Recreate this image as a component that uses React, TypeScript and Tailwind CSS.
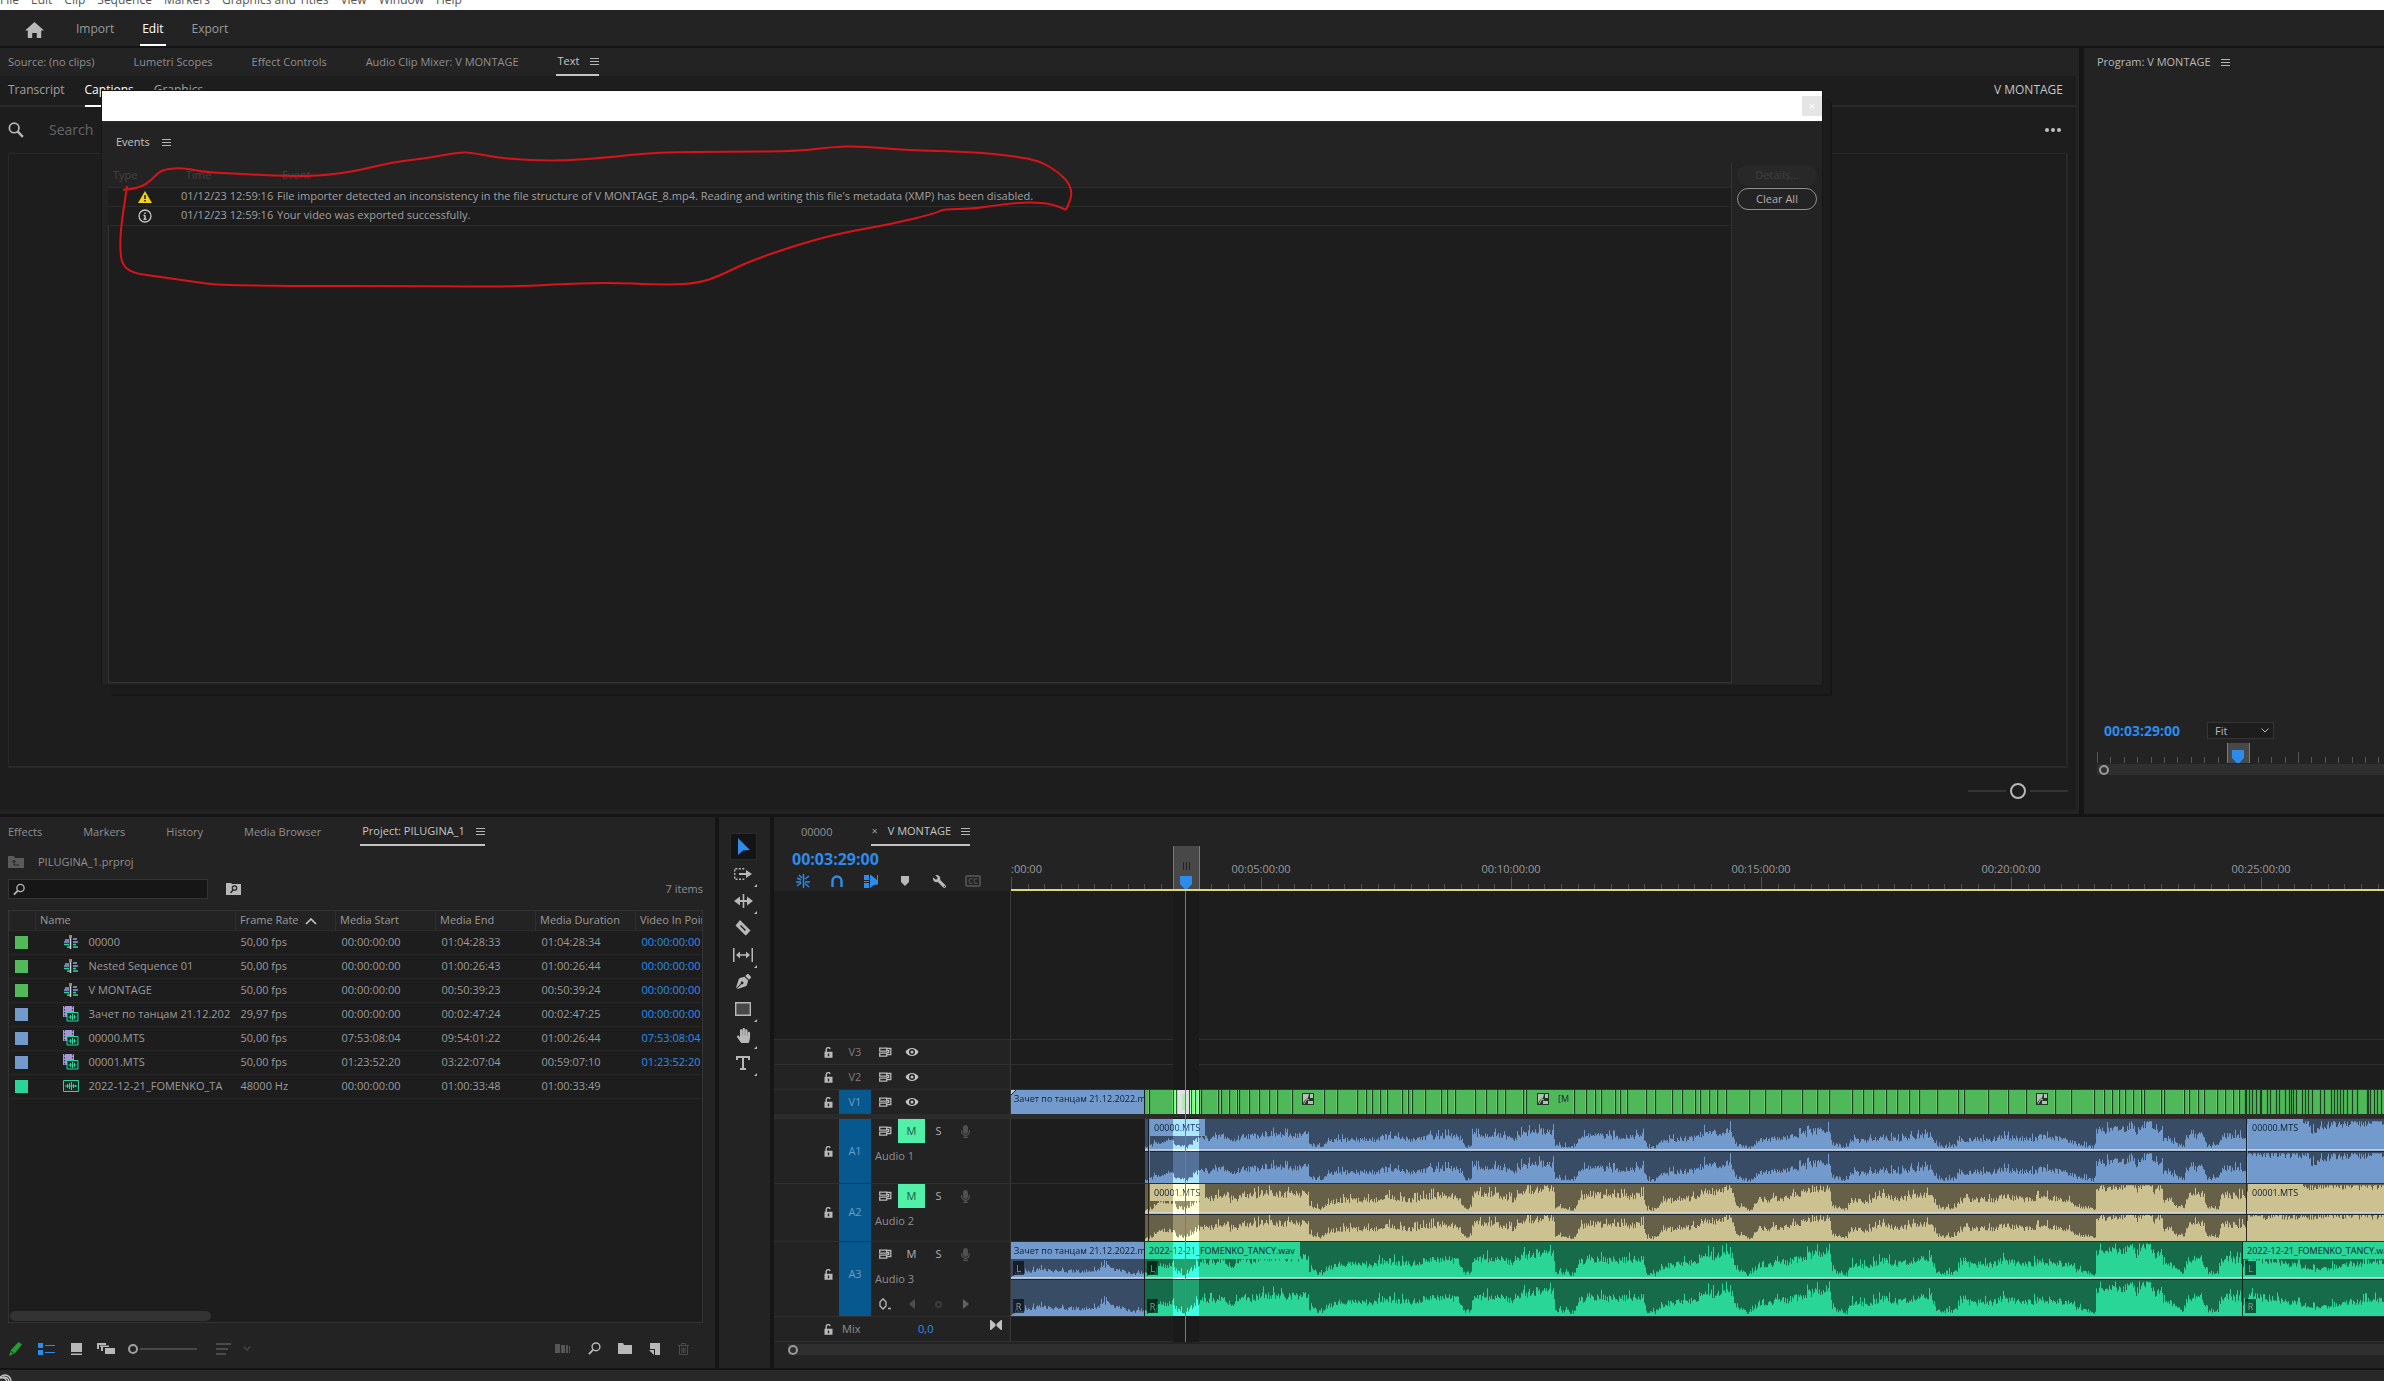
import React, { useState } from "react";
import clsx from "clsx";
import { FaHandPaper, FaMicrophone, FaPenNib, FaWrench } from "react-icons/fa";

type Point = [number, number];

interface MediaItem {
  name: string;
  kind: "sequence" | "video" | "audio";
  swatch: string;
  rate: string;
  start: string;
  end: string;
  duration: string;
  inPoint: string;
}

const MENU = ["File", "Edit", "Clip", "Sequence", "Markers", "Graphics and Titles", "View", "Window", "Help"];

const MEDIA: MediaItem[] = [
  { name: "00000", kind: "sequence", swatch: "bg-[#52b95a]", rate: "50,00 fps", start: "00:00:00:00", end: "01:04:28:33", duration: "01:04:28:34", inPoint: "00:00:00:00" },
  { name: "Nested Sequence 01", kind: "sequence", swatch: "bg-[#52b95a]", rate: "50,00 fps", start: "00:00:00:00", end: "01:00:26:43", duration: "01:00:26:44", inPoint: "00:00:00:00" },
  { name: "V MONTAGE", kind: "sequence", swatch: "bg-[#52b95a]", rate: "50,00 fps", start: "00:00:00:00", end: "00:50:39:23", duration: "00:50:39:24", inPoint: "00:00:00:00" },
  { name: "Зачет по танцам 21.12.202", kind: "video", swatch: "bg-[#729acc]", rate: "29,97 fps", start: "00:00:00:00", end: "00:02:47:24", duration: "00:02:47:25", inPoint: "00:00:00:00" },
  { name: "00000.MTS", kind: "video", swatch: "bg-[#729acc]", rate: "50,00 fps", start: "07:53:08:04", end: "09:54:01:22", duration: "01:00:26:44", inPoint: "07:53:08:04" },
  { name: "00001.MTS", kind: "video", swatch: "bg-[#729acc]", rate: "50,00 fps", start: "01:23:52:20", end: "03:22:07:04", duration: "00:59:07:10", inPoint: "01:23:52:20" },
  { name: "2022-12-21_FOMENKO_TA", kind: "audio", swatch: "bg-[#2ad59a]", rate: "48000 Hz", start: "00:00:00:00", end: "01:00:33:48", duration: "01:00:33:49", inPoint: "" },
];

// Lane drawings use timeline pixels; the lane itself starts at 1011.
const LANE_START = 1011;
const LANE_END = 2384;

const CUTS = [
  1149, 1173, 1176, 1189, 1191, 1195, 1199, 1201, 1218, 1221, 1229, 1237, 1239, 1249, 1259, 1269, 1277, 1292, 1324, 1337,
  1357, 1366, 1372, 1380, 1387, 1402, 1408, 1412, 1425, 1441, 1447, 1455, 1475, 1486, 1497, 1505, 1523, 1526, 1574,
  1586, 1595, 1601, 1615, 1620, 1627, 1646, 1655, 1672, 1682, 1695, 1700, 1709, 1717, 1726, 1749, 1765, 1781, 1802,
  1817, 1829, 1852, 1863, 1873, 1886, 1897, 1909, 1919, 1937, 1958, 1964, 1988, 2008, 2026, 2055, 2071, 2094, 2104,
  2112, 2119, 2125, 2133, 2141, 2144, 2161, 2164, 2184, 2189, 2198, 2204, 2217, 2225, 2233, 2239, 2245, 2246, 2249,
  2252, 2256, 2260, 2261, 2267, 2270, 2276, 2279, 2285, 2289, 2291, 2293, 2296, 2302, 2305, 2308, 2312, 2320, 2324,
  2331, 2334, 2337, 2340, 2343, 2347, 2352, 2357, 2367, 2368, 2370, 2374, 2377, 2381,
];

const ENVELOPE: Point[] = [
  [1145, 0.1], [1150, 0.12], [1160, 0.3], [1172, 0.32], [1177, 0.15], [1187, 0.1], [1194, 0.3], [1200, 0.4], [1215, 0.4],
  [1222, 0.5], [1232, 0.3], [1245, 0.5], [1250, 0.45], [1266, 0.55], [1282, 0.5], [1300, 0.5], [1308, 0.55], [1309, 0.22],
  [1321, 0.1], [1327, 0.25], [1339, 0.35], [1375, 0.35], [1384, 0.45], [1411, 0.35], [1429, 0.45], [1443, 0.48],
  [1457, 0.45], [1464, 0.15], [1471, 0.12], [1472, 0.5], [1496, 0.5], [1514, 0.35], [1521, 0.55], [1536, 0.62],
  [1553, 0.62], [1555, 0.15], [1575, 0.1], [1578, 0.4], [1589, 0.5], [1607, 0.45], [1629, 0.45], [1643, 0.5], [1647, 0.1],
  [1655, 0.1], [1661, 0.3], [1679, 0.38], [1693, 0.4], [1704, 0.6], [1718, 0.55], [1730, 0.7], [1736, 0.2], [1750, 0.08],
  [1759, 0.35], [1786, 0.4], [1810, 0.6], [1829, 0.68], [1832, 0.2], [1847, 0.1], [1851, 0.35], [1865, 0.3], [1870, 0.35],
  [1883, 0.45], [1898, 0.35], [1912, 0.45], [1931, 0.5], [1937, 0.12], [1956, 0.15], [1960, 0.35], [1993, 0.35],
  [2000, 0.45], [2030, 0.35], [2041, 0.45], [2052, 0.4], [2066, 0.35], [2077, 0.2], [2095, 0.1], [2096, 0.65],
  [2125, 0.72], [2132, 0.88], [2136, 0.62], [2147, 0.88], [2154, 0.6], [2162, 0.7], [2163, 0.35], [2169, 0.4],
  [2176, 0.2], [2184, 0.15], [2186, 0.45], [2202, 0.5], [2207, 0.15], [2218, 0.15], [2222, 0.5], [2242, 0.45], [2246, 0.3],
];

const BLUE_TAIL: Point[] = [[2246, 0.3], [2248, 0.93], [2308, 0.93], [2312, 0.62], [2318, 0.62], [2322, 0.82], [2340, 0.88], [2384, 0.95]];
const TAN_TAIL: Point[] = [[2246, 0.5], [2248, 0.92], [2384, 0.94]];
const GREEN_TAIL: Point[] = [[2243, 0.3], [2250, 0.55], [2262, 0.52], [2290, 0.4], [2315, 0.22], [2345, 0.38], [2384, 0.48]];
const INTRO: Point[] = [[1011, 0.1], [1016, 0.2], [1024, 0.3], [1040, 0.45], [1052, 0.35], [1080, 0.35], [1096, 0.4], [1104, 0.65], [1112, 0.5], [1124, 0.35], [1132, 0.2], [1144, 0.3]];

function levelAt(env: Point[], x: number) {
  for (let i = 1; i < env.length; i++) {
    if (x <= env[i][0]) {
      const [x0, y0] = env[i - 1];
      const [x1, y1] = env[i];
      return y0 + ((y1 - y0) * (x - x0)) / (x1 - x0);
    }
  }
  return env[env.length - 1][1];
}

function noise(x: number, seed: number) {
  const v = Math.sin(x * 12.9898 + seed * 78.233) * 43758.5453;
  return v - Math.floor(v);
}

function wavePath(env: Point[], from: number, to: number, base: number, height: number, gain: number, seed: number) {
  let d = `M${from - LANE_START} ${base}`;
  for (let x = from; x < to; x++) {
    const n = noise(x, seed);
    const level = levelAt(env, x) * gain;
    const jitter = (n - 0.5) * 0.28 + (n > 0.93 ? 0.12 : 0);
    const h = Math.max(0.04, Math.min(0.96, level + jitter * Math.min(1, 0.35 + level))) * height;
    d += `V${(base - h).toFixed(1)}H${x + 1 - LANE_START}`;
  }
  return `${d}V${base}Z`;
}

const SCRIBBLE: Point[] = [
  [123, 190], [134, 189], [147, 184], [155, 176], [162, 170], [176, 168], [190, 169], [204, 172], [240, 174], [286, 176], [316, 176], [352, 172],
  [393, 162], [429, 158], [459, 152], [474, 153], [505, 159], [556, 161], [602, 158], [658, 152], [730, 152], [800, 151],
  [831, 147], [861, 146], [902, 150], [973, 152], [1014, 156], [1040, 161], [1058, 172], [1069, 183], [1072, 194], [1069, 203], [1066, 210],
  [1064, 209], [1052, 204], [1030, 202], [1004, 204], [973, 209], [943, 209], [937, 213], [892, 224], [841, 233], [800, 244],
  [750, 261], [719, 276], [699, 283], [668, 285], [597, 282], [510, 287], [449, 286], [224, 286], [189, 281], [153, 276],
  [133, 273], [122, 265], [120, 248], [121, 227], [125, 200], [127, 186],
];

function smoothPath(points: Point[]) {
  let d = `M${points[0][0]} ${points[0][1]}`;
  for (let i = 1; i < points.length - 1; i++) {
    const [x, y] = points[i];
    const [nx, ny] = points[i + 1];
    d += `Q${x} ${y} ${(x + nx) / 2} ${(y + ny) / 2}`;
  }
  const last = points[points.length - 1];
  return `${d}L${last[0]} ${last[1]}`;
}

const Burger = () => (
  <svg width="9" height="9" viewBox="0 0 9 9" stroke="#b5b5b5" className="shrink-0">
    <path d="M0 1.5h9M0 4.5h9M0 7.5h9" />
  </svg>
);

const Lens = ({ className, size = 14 }: { className?: string; size?: number }) => (
  <svg width={size} height={size} viewBox="0 0 14 14" fill="none" stroke="currentColor" strokeWidth="1.5" className={className}>
    <circle cx="8.6" cy="5.2" r="4.2" />
    <path d="M5.6 8.2 1 13" strokeWidth="2" />
  </svg>
);

const LockIcon = () => (
  <svg width="9" height="11" viewBox="0 0 9 11" className="text-[#b9b9b9]">
    <path d="M2.2 5V2.6a2 2 0 0 1 3.9-.6" fill="none" stroke="currentColor" strokeWidth="1.4" />
    <path fillRule="evenodd" d="M.5 4.8h8v5.9h-8zM3.8 6.4v2.8h1.4V6.4z" fill="currentColor" />
  </svg>
);

const SyncIcon = () => (
  <svg width="13" height="11" viewBox="0 0 13 11" fill="none" stroke="#b9b9b9" strokeWidth="1.3">
    <path d="M.7 1.2h7v3h-7zM.7 6.2h7v3h-7z" />
    <path d="M7.7 1.5h4.1v6.2H7.7M7.7 3.7h2v2h-2" />
  </svg>
);

const EyeIcon = () => (
  <svg width="14" height="10" viewBox="0 0 14 10">
    <path d="M.5 5C3-.2 11-.2 13.5 5 11 10.2 3 10.2.5 5z" fill="#c4c4c4" />
    <circle cx="7" cy="5" r="3" fill="#232323" />
    <circle cx="7" cy="5" r="1.5" fill="#c4c4c4" />
  </svg>
);

const FxBadge = () => (
  <svg width="12" height="12" viewBox="0 0 12 12">
    <path d="M0 0h12v12H0z" fill="#1c3a1f" />
    <path d="M1 1h6l-1 4-2 1-3 4zM8 1h3v4H8zM6 8h5v3H6z" fill="#b8bdb8" />
    <path d="M2 11 5 6l2 1" stroke="#b8bdb8" fill="none" />
  </svg>
);

const MediaIcon = ({ kind }: { kind: MediaItem["kind"] }) => {
  if (kind === "sequence") {
    return (
      <svg width="16" height="14" viewBox="0 0 16 14">
        <path d="M2 5h4M1 7h5M10 4h4M10 7h5" stroke="#8fa3e0" strokeWidth="1.5" />
        <path d="M1 9.5h5M10 9.5h3M4 12h3M10 12h5" stroke="#2fd39b" strokeWidth="1.5" />
        <path d="M7.5 1v13" stroke="#d0d0d0" strokeWidth="1.5" />
        <path d="M6 0h3v3H6z" fill="#8b8b8b" />
      </svg>
    );
  }
  return (
    <svg width="16" height="16" viewBox="0 0 16 16">
      {kind === "video" && (
        <>
          <path d="M0 0h11v11H0z" fill="#a596d8" />
          <path d="M1.5 0v11M9.5 0v11" stroke="#352f4c" strokeDasharray="1.5 1.5" />
          <path d="M4 6.5h11v8.5H4z" fill="#1d2a26" stroke="#2fd39b" />
          <path d="M5.5 11h8M7.5 9v4M9.5 8v6M11.5 9v4" stroke="#2fd39b" />
        </>
      )}
      {kind === "audio" && (
        <>
          <path d="M.5 2.5h15v11H.5z" fill="#1d2a26" stroke="#2fd39b" />
          <path d="M2 8h12M4.5 6v4M6.5 5v6M8.5 4v8M10.5 6v4M12.5 7v2" stroke="#2fd39b" />
        </>
      )}
    </svg>
  );
};

const PlayheadMarker = () => (
  <svg width="12" height="13" viewBox="0 0 12 13" className="mr-px shrink-0">
    <path d="M0 0h12v8l-4.5 5h-3L0 8z" fill="#2d8ceb" />
  </svg>
);

const TopBar = () => {
  const [active, setActive] = useState("Edit");
  return (
    <>
      <nav className="flex h-[10px] shrink-0 items-end gap-3 overflow-hidden bg-white pb-[2px] text-[12px] leading-4 text-[#555]">
        {MENU.map((m) => (
          <a key={m} href="#" className="shrink-0 whitespace-nowrap">{m}</a>
        ))}
      </nav>
      <header className="flex h-[38px] shrink-0 items-stretch border-b-2 border-[#141414] bg-[#232323] pl-[25px]">
        <button aria-label="Home" className="mr-[30px] flex items-center pt-1">
          <svg width="19" height="16" viewBox="0 0 19 16" fill="#b8b8b8">
            <path d="M9.5 0 19 8.5h-2.8V16h-4.4v-5H7.2v5H2.8V8.500H0z" />
          </svg>
        </button>
        <div className="flex gap-6">
          {["Import", "Edit", "Export"].map((t) => (
            <button
              key={t}
              onClick={() => setActive(t)}
              className={clsx("border-b-2 px-[2px] pt-1 text-[12px]", active === t ? "border-white text-white" : "border-transparent text-[#9a9a9a]")}
            >
              {t}
            </button>
          ))}
        </div>
      </header>
    </>
  );
};

const PanelTabs = ({ tabs, active, className }: { tabs: string[]; active: string; className: string }) => (
  <div className={clsx("flex h-7 shrink-0 items-center pl-2 text-[11px] text-[#8f8f8f]", className)}>
    {tabs.map((t) =>
      t === active ? (
        <button key={t} className="-mx-[2px] flex h-full items-center gap-[11px] border-b-2 border-[#c4c4c4] pl-[2px] text-[#c4c4c4]">
          {t}
          <Burger />
        </button>
      ) : (
        <button key={t} className="shrink-0 whitespace-nowrap">{t}</button>
      )
    )}
  </div>
);

const EventsWindow = () => (
  <section className="absolute top-[43px] right-[257px] left-[102px] flex h-[594px] flex-col bg-[#232323] shadow-[8px_9px_0_0_#1b1b1b,10px_11px_0_0_#151515] outline outline-[#161616]">
    <div className="flex h-[30px] shrink-0 items-center justify-end bg-white">
      <button aria-label="Close" className="flex h-5 w-5 items-center justify-center bg-[#e5e5e5] text-[11px] text-white">×</button>
    </div>
    <div className="flex h-[42px] shrink-0 items-center gap-3 border-t border-[#2d2d2d] pl-[14px] text-[11px] text-[#c4c4c4]">
      Events
      <Burger />
    </div>
    <div className="flex min-h-0 flex-1 pb-[2px] pl-[6px]">
      <div className="flex flex-1 flex-col">
        <table className="w-full table-fixed text-left text-[11px] text-[#a0a0a0]">
          <colgroup>
            <col className="w-[73px]" />
            <col className="w-[96px]" />
            <col />
          </colgroup>
          <thead>
            <tr className="h-6 text-[#444]">
              <th className="pl-[5px] font-normal">Type</th>
              <th className="pl-[5px] font-normal">Time</th>
              <th className="pl-[5px] font-normal">Event</th>
            </tr>
          </thead>
          <tbody className="bg-[#1d1d1d]">
            <tr className="h-[19px] border-y border-[#2c2c2c]">
              <td>
                <svg width="14" height="12" viewBox="0 0 14 12" className="ml-[30px]">
                  <path d="M7 0l7 12H0z" fill="#f0d21c" />
                  <path d="M7 4v4M7 9v1.5" stroke="#222" strokeWidth="1.5" />
                </svg>
              </td>
              <td className="whitespace-nowrap">01/12/23 12:59:16</td>
              <td className="whitespace-nowrap">File importer detected an inconsistency in the file structure of V MONTAGE_8.mp4. Reading and writing this file's metadata (XMP) has been disabled.</td>
            </tr>
            <tr className="h-[19px] border-y border-[#2c2c2c]">
              <td>
                <svg width="14" height="14" viewBox="0 0 14 14" className="ml-[30px]" fill="none" stroke="#c4c4c4">
                  <circle cx="7" cy="7" r="6" strokeWidth="1.3" />
                  <path d="M7 6.3v4M7 3.5v1.5M5.5 6.5H7M5.5 10.3h3" strokeWidth="1.5" />
                </svg>
              </td>
              <td className="whitespace-nowrap">01/12/23 12:59:16</td>
              <td className="whitespace-nowrap">Your video was exported successfully.</td>
            </tr>
          </tbody>
        </table>
        <div className="flex-1 border-b border-l border-[#333] bg-[#1d1d1d]" />
      </div>
      <div className="flex w-[91px] flex-col gap-[2px] border-l border-[#333] px-[5px] pt-[2px] text-[11px]">
        <button disabled className="h-[21px] rounded-full bg-[#282828] text-[#404040]">Details...</button>
        <button className="h-[22px] rounded-full border border-[#8f8f8f] text-[#b0b0b0]">Clear All</button>
      </div>
    </div>
    <svg className="pointer-events-none absolute top-0 left-0" width="1000" height="210" viewBox="102 91 1000 210">
      <path d={smoothPath(SCRIBBLE)} fill="none" stroke="#d8131a" strokeWidth="2" strokeLinejoin="round" />
    </svg>
  </section>
);

const TextPanel = () => (
  <section className="relative flex flex-1 flex-col bg-[#232323] pr-[3px] pb-1">
    <PanelTabs className="gap-[39px]" tabs={["Source: (no clips)", "Lumetri Scopes", "Effect Controls", "Audio Clip Mixer: V MONTAGE", "Text"]} active="Text" />
    <div className="flex flex-1 flex-col bg-[#1d1d1d]">
      <div className="flex h-[31px] shrink-0 items-stretch gap-5 border-b-2 border-[#2a2a2a] pr-[13px] pl-2 text-[12px] text-[#a0a0a0]">
        <button className="pb-[2px]">Transcript</button>
        <button className="-mb-[2px] border-b-2 border-white pb-[2px] text-white">Captions</button>
        <button className="pb-[2px]">Graphics</button>
        <span className="ml-auto self-center pb-[2px] text-[#c4c4c4]">V MONTAGE</span>
      </div>
      <div className="flex h-[46px] shrink-0 items-center pr-[15px] pl-2">
        <Lens size={16} className="-scale-x-100 text-[#b8b8b8]" />
        <input aria-label="Search captions" placeholder="Search" className="ml-[25px] w-60 bg-transparent pb-[2px] text-[14px] placeholder-[#666] outline-none" />
        <button aria-label="More" className="ml-auto flex gap-[2px]">
          <i className="h-1 w-1 rounded-full bg-[#c0c0c0]" />
          <i className="h-1 w-1 rounded-full bg-[#c0c0c0]" />
          <i className="h-1 w-1 rounded-full bg-[#c0c0c0]" />
        </button>
      </div>
      <div className="mr-2 ml-2 flex-1 border-2 border-t border-l border-[#282828]" />
      <div className="flex h-[42px] shrink-0 items-center justify-end pt-1 pr-2">
        <input
          type="range"
          aria-label="Zoom captions"
          className="h-4 w-[100px] appearance-none bg-transparent [&::-webkit-slider-runnable-track]:h-[2px] [&::-webkit-slider-runnable-track]:bg-[#333] [&::-webkit-slider-thumb]:-mt-[7px] [&::-webkit-slider-thumb]:h-4 [&::-webkit-slider-thumb]:w-4 [&::-webkit-slider-thumb]:appearance-none [&::-webkit-slider-thumb]:rounded-full [&::-webkit-slider-thumb]:border-2 [&::-webkit-slider-thumb]:border-[#b8b8b8] [&::-webkit-slider-thumb]:bg-[#1d1d1d] [&::-webkit-slider-thumb]:shadow-[0_0_0_4px_#1d1d1d]"
        />
      </div>
    </div>
    <EventsWindow />
  </section>
);

const ProgramPanel = () => (
  <section className="flex w-[300px] shrink-0 flex-col bg-[#232323] pl-[13px]">
    <div className="flex h-7 items-center gap-[10px] text-[11px] text-[#b8b8b8]">
      Program: V MONTAGE
      <Burger />
    </div>
    <div className="flex-1" />
    <div className="flex h-5 items-center gap-[27px] pl-[7px]">
      <span className="text-[14px] font-bold text-[#2d8ceb]">00:03:29:00</span>
      <div className="relative">
        <select aria-label="Zoom level" className="block h-[17px] w-[67px] appearance-none border border-[#353535] bg-[#1d1d1d] pl-[7px] text-[11px] leading-none text-[#b8b8b8]">
          <option>Fit</option>
        </select>
        <svg width="8" height="5" viewBox="0 0 8 5" fill="none" stroke="#b8b8b8" className="pointer-events-none absolute top-[6px] right-[5px]">
          <path d="M.5.5 4 4 7.5.5" />
        </svg>
      </div>
    </div>
    <div className="relative mt-[2px] h-[22px] overflow-hidden">
      <svg width="287" height="22" stroke="#555">
        {Array.from({ length: 22 }, (_, i) => {
          const x = Math.round(i * 13.4) + 0.5;
          return <path key={i} d={`M${x} ${i % 15 === 0 ? 10 : 15}V21`} />;
        })}
      </svg>
      <div className="absolute top-[1px] left-[130px] flex h-[20px] w-[23px] items-end justify-center border-x border-[#2d8ceb] bg-[#484848]">
        <PlayheadMarker />
      </div>
    </div>
    <div className="mb-[39px] flex h-[11px] items-center bg-[#2f2f2f] pl-[2px]">
      <i className="h-[10px] w-[10px] rounded-full border-2 border-[#9a9a9a]" />
    </div>
  </section>
);

const ProjectPanel = () => (
  <section className="flex w-[715px] shrink-0 flex-col bg-[#232323] pt-px pr-3">
    <PanelTabs className="gap-[41px]" tabs={["Effects", "Markers", "History", "Media Browser", "Project: PILUGINA_1"]} active="Project: PILUGINA_1" />
    <div className="mt-[5px] flex h-[22px] items-center gap-[14px] pl-2 text-[11px] text-[#8f8f8f]">
      <svg width="16" height="12" viewBox="0 0 16 12">
        <path d="M0 0h6l1 2h9v10H0z" fill="#5a5a5a" />
        <path d="M6 5v4h5M4 6.5 6 4l2 2.5" fill="none" stroke="#222" />
      </svg>
      PILUGINA_1.prproj
    </div>
    <div className="mt-[6px] flex h-5 items-center pl-2">
      <label className="flex h-5 w-[200px] items-center border border-[#333] bg-[#161616] pl-1">
        <Lens size={13} className="text-[#b8b8b8]" />
        <input aria-label="Filter bin content" className="w-full bg-transparent pl-1 text-[11px] text-[#b8b8b8] outline-none" />
      </label>
      <button aria-label="Create search bin" className="ml-[18px]">
        <svg width="15" height="12" viewBox="0 0 15 12">
          <path d="M0 0h5l1 1h9v11H0z" fill="#b8b8b8" />
          <circle cx="8.5" cy="5" r="2.2" fill="none" stroke="#222" strokeWidth="1.3" />
          <path d="M7 7 4.5 10" stroke="#222" strokeWidth="1.3" />
        </svg>
      </button>
      <span className="ml-auto text-[11px] text-[#8f8f8f]">7 items</span>
    </div>
    <div className="mt-[11px] ml-2 flex flex-1 flex-col overflow-hidden border border-[#333] bg-[#1d1d1d]">
      <table className="w-full table-fixed text-left text-[11px] text-[#9a9a9a]">
        <colgroup>
          <col className="w-[26px]" />
          <col className="w-[200px]" />
          <col className="w-[100px]" />
          <col className="w-[100px]" />
          <col className="w-[100px]" />
          <col className="w-[100px]" />
          <col />
        </colgroup>
        <thead>
          <tr className="h-[19px] border-b border-[#2a2a2a] bg-[#232323] whitespace-nowrap [&>th]:border-l [&>th]:border-[#2e2e2e] [&>th]:pl-1 [&>th]:font-normal">
            <th aria-label="Label" />
            <th>Name</th>
            <th>
              Frame Rate
              <svg width="12" height="7" viewBox="0 0 12 7" fill="none" stroke="#c4c4c4" strokeWidth="1.6" className="ml-[6px] inline">
                <path d="M1 6 6 1l5 5" />
              </svg>
            </th>
            <th>Media Start</th>
            <th>Media End</th>
            <th>Media Duration</th>
            <th className="overflow-hidden">Video In Poin</th>
          </tr>
        </thead>
        <tbody>
          {MEDIA.map((m) => (
            <tr key={m.name} className="h-6 border-b border-[#282828] whitespace-nowrap">
              <td>
                <div className={clsx("ml-[5px] h-[13px] w-[13px]", m.swatch)} />
              </td>
              <td className="overflow-hidden pl-[27px]">
                <div className="flex items-center gap-[10px]">
                  <span className="w-4 shrink-0"><MediaIcon kind={m.kind} /></span>
                  {m.name}
                </div>
              </td>
              <td className="pl-[5px]">{m.rate}</td>
              <td className="pl-[6px]">{m.start}</td>
              <td className="pl-[6px]">{m.end}</td>
              <td className="pl-[6px]">{m.duration}</td>
              <td className="pl-[6px] text-[#2d8ceb]">{m.inPoint}</td>
            </tr>
          ))}
        </tbody>
      </table>
      <div className="mt-auto mb-px ml-px h-[10px] w-[201px] rounded-full bg-[#333]" />
    </div>
    <div className="flex h-[45px] shrink-0 items-center pt-[6px] pl-2 text-[#b8b8b8]">
      <button aria-label="Project writable">
        <svg width="15" height="14" viewBox="0 0 15 14">
          <path d="M10.5 0 14 2.5 7 11 1 14 3 8z" fill="#1fa031" />
          <path d="M3 9.5 5.5 11" stroke="#232323" />
        </svg>
      </button>
      <button aria-label="List view" className="ml-[15px]">
        <svg width="17" height="12" viewBox="0 0 17 12" fill="#2d8ceb">
          <path d="M0 0h5v5H0zM0 7h5v5H0zM7 2h10v1H7zM7 9h10v1H7z" />
        </svg>
      </button>
      <button aria-label="Icon view" className="ml-4">
        <svg width="11" height="12" viewBox="0 0 11 12" fill="currentColor">
          <path d="M0 0h11v9H0zM0 10.5h11V12H0z" />
        </svg>
      </button>
      <button aria-label="Freeform view" className="ml-[15px]">
        <svg width="18" height="11" viewBox="0 0 18 11">
          <path d="M0 0h9v2H2v4H0zM3 2.5h9v1.500H6v4H4V4H3zM8 5h10v6H8z" fill="currentColor" />
        </svg>
      </button>
      <input
        type="range"
        aria-label="Thumbnail size"
        defaultValue={0}
        className="ml-[13px] h-[10px] w-[69px] appearance-none bg-transparent [&::-webkit-slider-runnable-track]:h-[2px] [&::-webkit-slider-runnable-track]:bg-[#484848] [&::-webkit-slider-thumb]:-mt-1 [&::-webkit-slider-thumb]:h-[10px] [&::-webkit-slider-thumb]:w-[10px] [&::-webkit-slider-thumb]:appearance-none [&::-webkit-slider-thumb]:rounded-full [&::-webkit-slider-thumb]:border-2 [&::-webkit-slider-thumb]:border-[#a0a0a0] [&::-webkit-slider-thumb]:bg-[#232323] [&::-webkit-slider-thumb]:shadow-[0_0_0_2px_#232323]"
      />
      <button aria-label="Sort icons" className="ml-[19px] flex items-center gap-3">
        <svg width="15" height="12" viewBox="0 0 15 12" stroke="#5a5a5a" strokeWidth="1.5">
          <path d="M0 1h15M0 6h12M0 11h10" />
        </svg>
        <svg width="8" height="5" viewBox="0 0 8 5" fill="none" stroke="#444" strokeWidth="1.5">
          <path d="M.5.5 4 4 7.5.5" />
        </svg>
      </button>
      <div className="ml-auto flex items-center gap-[17px] pr-[14px]">
        <button aria-label="Automate to sequence" disabled>
          <svg width="16" height="9" viewBox="0 0 16 9" fill="#555"><path d="M0 0h5v9H0zM6 1h4v8H6zM11 1h2v8h-2zM14 2h1v7h-1z" /></svg>
        </button>
        <button aria-label="Find"><Lens size={13} /></button>
        <button aria-label="New bin">
          <svg width="14" height="11" viewBox="0 0 14 11" fill="currentColor"><path d="M0 0h5l1 2h8v9H0z" /></svg>
        </button>
        <button aria-label="New item">
          <svg width="12" height="12" viewBox="0 0 12 12" fill="currentColor"><path d="M1 0h10v12H6V6H1zM0 7l5 5V7z" /></svg>
        </button>
        <button aria-label="Clear" disabled>
          <svg width="11" height="12" viewBox="0 0 11 12" fill="none" stroke="#4a4a4a"><path d="M0 2.5h11M3.5 2V.5h4V2M1.5 3v8.5h8V3M4 4.5v5.5M5.5 4.5v5.5M7 4.5v5.5" /></svg>
        </button>
      </div>
    </div>
  </section>
);

const TOOLS: { label: string; more?: boolean; icon: React.ReactNode }[] = [
  { label: "Selection", icon: <svg width="13" height="17" viewBox="0 0 13 17"><path d="M1 0v17l5-4.500 7-.5z" fill="#2d8ceb" /></svg> },
  {
    label: "Track Select Forward",
    more: true,
    icon: (
      <svg width="18" height="12" viewBox="0 0 18 12">
        <path d="M10.3.7H.7v10.600h9.600" stroke="#b8b8b8" strokeWidth="1.4" strokeDasharray="2 1.5" fill="none" />
        <path d="M5 5h7V2l6 4-6 4V7H5z" fill="#b8b8b8" />
      </svg>
    ),
  },
  { label: "Ripple Edit", more: true, icon: <svg width="19" height="14" viewBox="0 0 19 14" fill="#b8b8b8"><path d="M8.700 0h1.600v14H8.700zM0 7l6-4.500V6h7V2.500L19 7l-6 4.500V8H6v3.500z" /></svg> },
  {
    label: "Razor",
    icon: (
      <svg width="16" height="16" viewBox="0 0 16 16">
        <path d="M5 0 15.5 10.5 11 15.5 9.5 14.5.5 5.5z" fill="#b8b8b8" />
        <path d="m5.5 5.5 5 5" stroke="#232323" strokeWidth="1.5" />
      </svg>
    ),
  },
  { label: "Slip", more: true, icon: <svg width="20" height="14" viewBox="0 0 20 14" fill="#b8b8b8"><path d="M0 0h1.500v14H0zM18.500 0H20v14h-1.500zM3 7l4-3.500v2.800h6V3.500L17 7l-4 3.500V7.700H7v2.800z" /></svg> },
  { label: "Pen", icon: <FaPenNib size={15} color="#b8b8b8" /> },
  { label: "Rectangle", more: true, icon: <svg width="16" height="14" viewBox="0 0 16 14"><path d="M.7.7h14.600v12.600H.7z" fill="#484848" stroke="#b8b8b8" strokeWidth="1.4" /></svg> },
  { label: "Hand", more: true, icon: <FaHandPaper size={15} color="#b8b8b8" /> },
  { label: "Type", more: true, icon: <svg width="14" height="14" viewBox="0 0 14 14" fill="none" stroke="#b8b8b8" strokeWidth="2"><path d="M1 4V1h12v3M7 1v12M4 13h6" /></svg> },
];

const ToolsPanel = () => (
  <section className="flex w-[51px] shrink-0 flex-col items-center bg-[#232323] pt-4 pr-[3px]">
    {TOOLS.map((t, i) => (
      <button
        key={t.label}
        aria-label={t.label}
        className={clsx("relative flex h-[27px] w-[27px] items-center justify-center", i === 0 && "border border-[#2a2a2a] bg-[#141414]")}
      >
        {t.icon}
        {t.more && <span className="absolute right-0 bottom-0 border-b-[3px] border-l-[3px] border-b-[#b8b8b8] border-l-transparent" />}
      </button>
    ))}
  </section>
);

const Wave = ({ from, to, fill, back, edge, upper, lower }: { from: number; to: number; fill: string; back: string; edge: number; upper: string; lower: string }) => (
  <>
    <rect x={from - LANE_START} y="0" width={to - from} height="100" fill={back} />
    <path d={upper} fill={fill} />
    <path d={lower} fill={fill} />
    <path d={`M${from - LANE_START} ${edge}H${to - LANE_START}`} stroke="#d3dbe3" strokeWidth="1.5" />
    <path d={`M${from - LANE_START} ${edge + 1.5}H${to - LANE_START}`} stroke="#20262e" strokeWidth="1.2" />
  </>
);

const Glow = () => <div className="absolute top-0 left-[162px] h-full w-[26px] bg-[#555] mix-blend-color-dodge" />;

const ChannelTag = ({ className, children }: { className: string; children: React.ReactNode }) => (
  <span className={clsx("absolute flex h-[14px] w-[11px] items-center justify-center bg-black/60 text-[#8a9a95]", className)}>{children}</span>
);

interface TrackProps {
  name: string;
  height: string;
  targeted?: boolean;
  audio?: string;
  muted?: boolean;
  keyframes?: boolean;
  children?: React.ReactNode;
}

const Track = ({ name, height, targeted, audio, muted, keyframes, children }: TrackProps) => (
  <div className={clsx("flex border-t border-[#303030]", height)}>
    <div className="flex w-[237px] shrink-0 border-r border-[#3a3a3a] bg-[#232323] pl-[50px]">
      <button aria-label={`Lock ${name}`} className={clsx("flex w-[15px] items-center", keyframes && "pb-[10px]")}>
        <LockIcon />
      </button>
      <button className={clsx("w-8 text-[11px]", targeted ? "bg-[#06588f] text-[#6f9dbd]" : "text-[#7d7d7d]", keyframes && "pb-[10px]")}>{name}</button>
      <div className="flex flex-1 flex-col pl-1 text-[11px] text-[#8f8f8f]">
        <div className="flex h-6 items-center">
          <button aria-label={`Sync lock ${name}`} className="ml-1 w-[19px]"><SyncIcon /></button>
          {audio ? (
            <>
              <button className={clsx("h-6 w-[27px]", muted ? "bg-[#50f0a8] text-[#1c5a3e]" : "text-[#b0b0b0]")}>M</button>
              <button className="w-[27px] text-[#b0b0b0]">S</button>
              <button aria-label={`Voice-over ${name}`} className="flex w-[27px] justify-center"><FaMicrophone size={13} color="#505050" /></button>
            </>
          ) : (
            <button aria-label={`Toggle output ${name}`} className="flex w-[27px] justify-center"><EyeIcon /></button>
          )}
        </div>
        {audio && <span className="mt-[5px] h-[23px]">{audio}</span>}
        {keyframes && (
          <div className="flex h-5 items-center">
            <button aria-label="Show keyframes" className="ml-1 w-[19px]">
              <svg width="13" height="12" viewBox="0 0 13 12" fill="none" stroke="#b8b8b8" strokeWidth="1.3">
                <path d="M4 .8 7 4v4l-3 3-3-3V4zM9 10.5h3" />
              </svg>
            </button>
            <button aria-label="Previous keyframe" className="flex w-[27px] justify-center"><svg width="6" height="10" fill="#505050"><path d="M6 0v10L0 5z" /></svg></button>
            <button aria-label="Add keyframe" className="flex w-[27px] justify-center"><i className="h-[7px] w-[7px] rounded-full border-2 border-[#3c3c3c]" /></button>
            <button aria-label="Next keyframe" className="flex w-[27px] justify-center"><svg width="6" height="10" fill="#606060"><path d="M0 0v10l6-5z" /></svg></button>
          </div>
        )}
      </div>
    </div>
    <div className="relative isolate z-10 flex-1 overflow-hidden text-[9px] leading-[17px] text-[#10202f]">{children}</div>
  </div>
);

const TimelineRuler = () => (
  <div className="relative flex-1 overflow-hidden text-[11px] leading-4 text-[#9a9a9a]">
    <span className="absolute top-11 left-0">:00:00</span>
    {["00:05:00:00", "00:10:00:00", "00:15:00:00", "00:20:00:00", "00:25:00:00"].map((t, i) => (
      <span key={t} className="absolute top-11 -translate-x-1/2" style={{ left: 250 * (i + 1) }}>{t}</span>
    ))}
    <svg className="absolute bottom-[2px] left-0" width="1400" height="12" stroke="#505050">
      {Array.from({ length: 84 }, (_, i) => {
        const x = Math.round((i * 250) / 15) + 0.5;
        return <path key={i} d={`M${x} ${i % 15 === 0 ? 0 : 7}V12`} />;
      })}
    </svg>
    <div className="absolute bottom-0 h-[2px] w-full bg-[#dcd873]" />
    <div className="absolute bottom-[2px] left-[162px] flex h-[43px] w-[27px] flex-col items-center justify-end gap-[6px] border-x border-[#2d8ceb] bg-[#484848]">
      <svg width="7" height="8" stroke="#222"><path d="M.5 0v8M3.5 0v8M6.5 0v8" /></svg>
      <PlayheadMarker />
    </div>
  </div>
);

const Timeline = () => (
  <section className="relative flex min-w-0 flex-1 flex-col bg-[#232323]">
    <div className="flex h-[74px] shrink-0">
      <div className="w-[237px] shrink-0 pt-px">
        <div className="flex h-7 items-stretch pl-[27px] text-[11px] text-[#8f8f8f]">
          <button>00000</button>
          <button className="ml-[39px] flex items-center gap-[10px] border-b-2 border-[#c4c4c4] text-[#c4c4c4]">
            <span className="text-[#9a9a9a]">×</span>
            V MONTAGE
            <Burger />
          </button>
        </div>
        <div className="mt-[3px] h-5 pl-[18px] text-[16px] leading-5 font-bold text-[#2d8ceb]">00:03:29:00</div>
        <div className="mt-1 flex items-center pl-3 [&>button]:flex [&>button]:h-4 [&>button]:w-[34px] [&>button]:items-center [&>button]:justify-center">
          <button aria-label="Insert as nests">
            <svg width="14" height="14" viewBox="0 0 14 14" stroke="#2d8ceb" strokeWidth="1.5">
              <path d="M7.5 0v14M1 4l4 2M0 8h5M1 12l4-3M9 5l4-3M9 8h5M9 9.5l4 3.5M3 1l3 3" />
            </svg>
          </button>
          <button aria-label="Snap">
            <svg width="12" height="12" viewBox="0 0 12 12" fill="none" stroke="#2d8ceb" strokeWidth="2.5"><path d="M1.5 12V6a4.5 4.5 0 0 1 9 0v6" /></svg>
          </button>
          <button aria-label="Linked selection">
            <svg width="15" height="13" viewBox="0 0 15 13" fill="#2d8ceb"><path d="M0 0h5v5H0zM6 0h1l6 5V0h1v9.500l-4 .5L6 13zM0 6h5v1H0zM0 8h5v5H0z" /></svg>
          </button>
          <button aria-label="Add marker">
            <svg width="8" height="10" viewBox="0 0 8 10" fill="#b8b8b8"><path d="M0 0h8v6L4 10 0 6z" /></svg>
          </button>
          <button aria-label="Timeline settings"><FaWrench size={13} color="#b8b8b8" className="-scale-x-100" /></button>
          <button aria-label="Captions">
            <span className="rounded-[2px] border-2 border-[#4c4c4c] px-px text-[8px] leading-[8px] font-bold text-[#4c4c4c]">CC</span>
          </button>
        </div>
      </div>
      <TimelineRuler />
    </div>

    <div className="relative bg-[#1d1d1d]">
      <div className="absolute top-0 left-[399px] h-full w-[26px] bg-[#1a1a1a]" />
      <div className="flex h-[148px]">
        <div className="w-[237px] border-r border-[#3a3a3a]" />
      </div>
      <Track name="V3" height="h-[25px]" />
      <Track name="V2" height="h-[25px]" />
      <Track name="V1" height="h-[25px]" targeted>
        <svg className="absolute top-0 left-0" width="1373" height="24">
          <rect width="133" height="24" fill="#729acc" />
          <path d="M0 0h5L0 5z" fill="#c9cfd6" />
          <path d="M5 0 0 5" stroke="#1d1d1d" />
          <rect x="134" width="1239" height="24" fill="#4fb858" />
          {CUTS.map((x) => (
            <path key={x} d={`M${x - LANE_START + 0.5} 0v24`} stroke="#1d4020" strokeWidth="1.2" />
          ))}
          {CUTS.filter((x) => x < 2240).map((x) => (
            <path key={x} d={`M${x - LANE_START - 0.5} 0v24`} stroke="#7ccb80" strokeWidth=".8" />
          ))}
        </svg>
        <Glow />
        <svg className="absolute top-0 left-[167px]" width="11" height="24">
          <path d="M0 0h11v24H0z" fill="#e4dfe6" />
          <path d="M4 4h4v16H4z" fill="#a8f0b0" />
        </svg>
        <span className="absolute top-0 left-0 w-[133px] overflow-hidden pl-[3px] whitespace-nowrap">Зачет по танцам 21.12.2022.m</span>
        <span className="absolute top-[3px] left-[291px]"><FxBadge /></span>
        <span className="absolute top-[3px] left-[526px]"><FxBadge /></span>
        <span className="absolute top-0 left-[547px]">[M</span>
        <span className="absolute top-[3px] left-[1025px]"><FxBadge /></span>
      </Track>
      <div className="relative h-1 bg-[#2b2b2b]" />
      <Track name="A1" height="h-[65px]" targeted audio="Audio 1" muted>
        <svg className="absolute top-0 left-0" width="1373" height="64">
          <Wave from={1145} to={2246} fill="#729acc" back="#384c66" edge={31} upper={wavePath(ENVELOPE, 1145, 2246, 31, 30, 1, 1)} lower={wavePath(ENVELOPE, 1145, 2246, 64, 31, 1, 1)} />
          <Wave from={2247} to={LANE_END} fill="#729acc" back="#384c66" edge={31} upper={wavePath(BLUE_TAIL, 2247, LANE_END, 31, 30, 1, 3)} lower={wavePath(BLUE_TAIL, 2247, LANE_END, 64, 31, 1, 3)} />
          <path d="M137.5 0v64M1235.5 0v64" stroke="#16202c" />
          <path d="M138.5 0v64M1236.5 0v64" stroke="#9db4d0" strokeWidth=".6" />
        </svg>
        <span className="absolute top-0 left-[139px] bg-[#729acc] pr-[5px] pl-1">00000.MTS</span>
        <span className="absolute top-0 left-[1237px] bg-[#729acc] pr-[5px] pl-1">00000.MTS</span>
        <Glow />
      </Track>
      <Track name="A2" height="h-[58px]" targeted audio="Audio 2" muted>
        <svg className="absolute top-0 left-0" width="1373" height="57">
          <Wave from={1145} to={2246} fill="#cbc191" back="#666048" edge={29} upper={wavePath(ENVELOPE, 1145, 2246, 29, 29, 1.3, 4)} lower={wavePath(ENVELOPE, 1145, 2246, 57, 27, 1.3, 4)} />
          <Wave from={2247} to={LANE_END} fill="#cbc191" back="#666048" edge={29} upper={wavePath(TAN_TAIL, 2247, LANE_END, 29, 29, 1, 6)} lower={wavePath(TAN_TAIL, 2247, LANE_END, 57, 27, 1, 6)} />
          <path d="M137.5 0v57M1235.5 0v57" stroke="#2c291c" />
        </svg>
        <span className="absolute top-0 left-[139px] bg-[#cbc191] pr-[5px] pl-1">00001.MTS</span>
        <span className="absolute top-0 left-[1237px] bg-[#cbc191] pr-[5px] pl-1">00001.MTS</span>
        <Glow />
      </Track>
      <Track name="A3" height="h-[75px]" targeted audio="Audio 3" keyframes>
        <svg className="absolute top-0 left-0" width="1373" height="74">
          <Wave from={1011} to={1144} fill="#729acc" back="#384c66" edge={36} upper={wavePath(INTRO, 1011, 1144, 36, 20, 1, 7)} lower={wavePath(INTRO, 1011, 1144, 74, 22, 1, 7)} />
          <Wave from={1145} to={2242} fill="#29d698" back="#166b4a" edge={36} upper={wavePath(ENVELOPE, 1145, 2242, 36, 36, 1.1, 9)} lower={wavePath(ENVELOPE, 1145, 2242, 74, 36, 1.1, 9)} />
          <Wave from={2243} to={LANE_END} fill="#29d698" back="#166b4a" edge={36} upper={wavePath(GREEN_TAIL, 2243, LANE_END, 36, 36, 1, 11)} lower={wavePath(GREEN_TAIL, 2243, LANE_END, 74, 36, 1, 11)} />
          <path d="M1231.5 0v74" stroke="#0e2c20" />
        </svg>
        <span className="absolute top-0 left-0 w-[133px] overflow-hidden bg-[#729acc] pl-[3px] whitespace-nowrap">Зачет по танцам 21.12.2022.m</span>
        <span className="absolute top-0 left-[134px] bg-[#29d698] pr-[5px] pl-1 whitespace-nowrap">2022-12-21_FOMENKO_TANCY.wav</span>
        <span className="absolute top-0 left-[1232px] bg-[#29d698] pr-[5px] pl-1 whitespace-nowrap">2022-12-21_FOMENKO_TANCY.wav</span>
        <ChannelTag className="top-[19px] left-[2px]">L</ChannelTag>
        <ChannelTag className="top-[57px] left-[2px]">R</ChannelTag>
        <ChannelTag className="top-[19px] left-[136px]">L</ChannelTag>
        <ChannelTag className="top-[57px] left-[136px]">R</ChannelTag>
        <ChannelTag className="top-[19px] left-[1234px]">L</ChannelTag>
        <ChannelTag className="top-[57px] left-[1234px]">R</ChannelTag>
        <Glow />
      </Track>
      <div className="flex h-[26px] border-y border-[#303030]">
        <div className="flex w-[237px] items-center border-r border-[#3a3a3a] bg-[#232323] pr-2 pl-[50px] text-[11px] text-[#8f8f8f]">
          <LockIcon />
          <span className="ml-[9px] w-[76px]">Mix</span>
          <span className="text-[#2d8ceb]">0,0</span>
          <svg width="12" height="10" viewBox="0 0 12 10" fill="#c0c0c0" className="mb-2 ml-auto"><path d="M0 0h1l4.500 4v2L1 10H0zM12 0h-1L6.500 4v2l4.500 4h1z" /></svg>
        </div>
      </div>
      <div className="absolute top-0 left-[411px] z-20 h-full w-px bg-[#2d8ceb]" />
    </div>
    <div className="mt-[2px] ml-[14px] flex h-[11px] shrink-0 items-center bg-[#2f2f2f]">
      <i className="h-[10px] w-[10px] rounded-full border-2 border-[#9a9a9a]" />
    </div>
    <div className="h-3 shrink-0" />
  </section>
);

export default function App() {
  return (
    <div className="flex h-screen flex-col overflow-hidden bg-[#151515] font-['Open_Sans','Noto_Sans',sans-serif]">
      <TopBar />
      <main className="flex min-h-0 flex-1 flex-col gap-[3px]">
        <div className="flex min-h-0 flex-1 gap-[5px]">
          <TextPanel />
          <ProgramPanel />
        </div>
        <div className="flex h-[551px] shrink-0 gap-1">
          <ProjectPanel />
          <ToolsPanel />
          <Timeline />
        </div>
      </main>
      <footer className="mt-[2px] h-[11px] shrink-0 overflow-hidden bg-[#282828]">
        <svg width="14" height="16" viewBox="0 0 14 16" className="mt-1" fill="none" stroke="#c4c4c4" strokeWidth="1.5">
          <circle cx="5" cy="7" r="6" />
          <path d="M0 4c3-1 6 0 7 4M0 8c2-1 3 0 4 2M3 3c4 0 6 2 6 5" />
        </svg>
      </footer>
    </div>
  );
}
